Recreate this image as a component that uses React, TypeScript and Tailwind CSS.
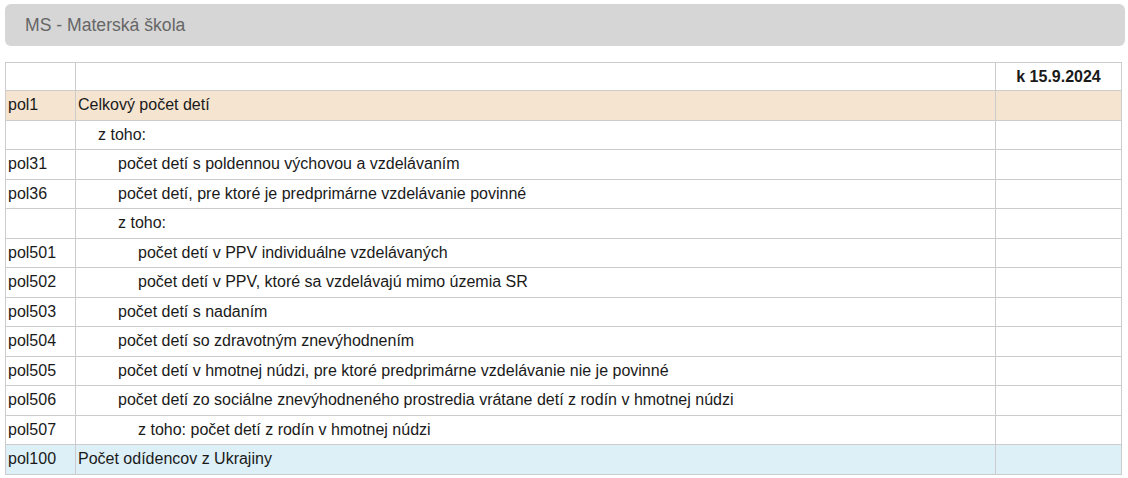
const rows: { code: string; label: string; level: number; tone?: "peach" | "blue" }[] = [
  { code: "pol1", label: "Celkový počet detí", level: 0, tone: "peach" },
  { code: "", label: "z toho:", level: 1 },
  { code: "pol31", label: "počet detí s poldennou výchovou a vzdelávaním", level: 2 },
  { code: "pol36", label: "počet detí, pre ktoré je predprimárne vzdelávanie povinné", level: 2 },
  { code: "", label: "z toho:", level: 2 },
  { code: "pol501", label: "počet detí v PPV individuálne vzdelávaných", level: 3 },
  { code: "pol502", label: "počet detí v PPV, ktoré sa vzdelávajú mimo územia SR", level: 3 },
  { code: "pol503", label: "počet detí s nadaním", level: 2 },
  { code: "pol504", label: "počet detí so zdravotným znevýhodnením", level: 2 },
  { code: "pol505", label: "počet detí v hmotnej núdzi, pre ktoré predprimárne vzdelávanie nie je povinné", level: 2 },
  { code: "pol506", label: "počet detí zo sociálne znevýhodneného prostredia vrátane detí z rodín v hmotnej núdzi", level: 2 },
  { code: "pol507", label: "z toho: počet detí z rodín v hmotnej núdzi", level: 3 },
  { code: "pol100", label: "Počet odídencov z Ukrajiny", level: 0, tone: "blue" },
];

const indent = ["pl-[2px]", "pl-[22px]", "pl-[42px]", "pl-[62px]"];

export default function App() {
  return (
    <div className="min-h-screen bg-white pt-[4px] pl-[5px] font-['Liberation_Sans',Arial,sans-serif] text-[16px]">
      {/* Section header */}
      <div className="flex h-[42px] w-[1120px] items-center rounded-[6px] bg-[#d6d6d6] px-[20px] text-[17.6px] text-[#666]">
        MS - Materská škola
      </div>

      {/* Data table */}
      <table className="mt-[16px] w-[1117px] table-fixed border-collapse text-[#1a1a1a]">
        <colgroup>
          <col className="w-[70px]" />
          <col className="w-[920px]" />
          <col />
        </colgroup>
        <thead>
          <tr className="h-[28px]">
            <th className="border border-[#ccc]" />
            <th className="border border-[#ccc]" />
            <th className="border border-[#ccc] text-center font-bold">k 15.9.2024</th>
          </tr>
        </thead>
        <tbody>
          {rows.map((r, i) => {
            const bg = r.tone === "peach" ? "bg-[#f4e4d0]" : r.tone === "blue" ? "bg-[#def0f7]" : "";
            return (
              <tr key={i} className={bg}>
                <td className="border border-[#ccc] py-[5px] pl-[2px] leading-[18.5px]">{r.code}</td>
                <td className={`border border-[#ccc] py-[5px] leading-[18.5px] ${indent[r.level]}`}>{r.label}</td>
                <td className="border border-[#ccc]" />
              </tr>
            );
          })}
        </tbody>
      </table>
    </div>
  );
}
